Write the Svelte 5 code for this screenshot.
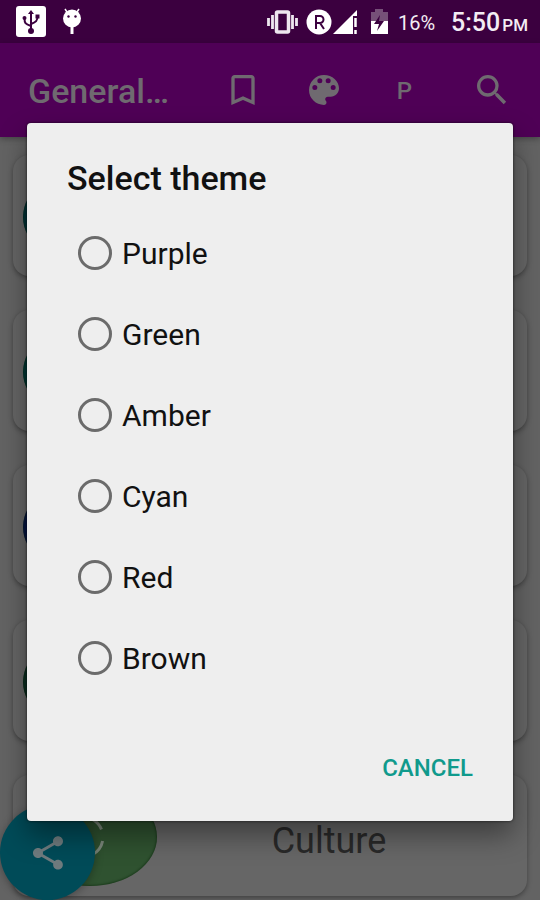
<script>
  const themes = ['Purple', 'Green', 'Amber', 'Cyan', 'Red', 'Brown'];
  const topics = [
    { color: '#00353c' },
    { color: '#003a38' },
    { color: '#071548' },
    { color: '#0d3024' },
    { color: '#2f5230', name: 'Culture' }
  ];
  let selected = $state('');
</script>

<div class="screen">
  <header class="status">
    <div class="group">
      <svg width="30" height="32" viewBox="0 0 30 32">
        <rect width="30" height="31" rx="3" fill="#fff" />
        <g fill="none" stroke="#3b003f" stroke-width="2">
          <path d="M15 25V7M15 20C9 18 8.500 17 8.500 12M15 18C20 16 21.500 15 21.500 10" />
        </g>
        <g fill="#3b003f">
          <circle cx="15" cy="25" r="3" />
          <path d="M12 8l3-4 3 4z" />
          <circle cx="8.500" cy="12" r="2" />
          <path d="M19.500 8.500h4v4h-4z" />
        </g>
      </svg>
      <svg width="20" height="28" viewBox="0 0 20 28">
        <g fill="#fff" stroke="#fff">
          <path d="M3 1l2 3M17 1l-2 3" stroke-width="1.500" />
          <circle cx="10" cy="10.500" r="9" stroke="none" />
          <path d="M10 18v8" stroke-width="3" />
        </g>
        <circle cx="6.500" cy="8.500" r="1.200" fill="#3b003f" />
        <circle cx="13.500" cy="8.500" r="1.200" fill="#3b003f" />
      </svg>
    </div>
    <div class="group right">
      <svg width="126" height="28" viewBox="0 0 126 28">
        <rect x="10.500" y="4" width="12" height="20" rx="1" fill="none" stroke="#eee6ef" stroke-width="3.500" />
        <path d="M6.500 7v14M2.500 10v8M26.500 7v14M30.500 10v8" stroke="#eee6ef" stroke-width="2.800" />
        <circle cx="53" cy="14" r="12.500" fill="#fff" />
        <path d="M50 21V8h4a3.200 3.200 0 0 1 0 7h-4M54 15l4 6" fill="none" stroke="#3b003f" stroke-width="2" />
        <path d="M67 26L91 2v6h-4v18z" fill="#fff" />
        <path d="M89.500 10v9M89.500 22v4" stroke="#fff" stroke-width="2.500" />
        <path d="M105 4h4V1h8v3h5v11h-17z" fill="#765078" />
        <path d="M105 13h17v13h-17z" fill="#fff" />
        <path d="M114 7l-6 9h5l-2 7 7-10h-5z" fill="#3b003f" />
      </svg>
      <span class="battery">16%</span>
      <span class="clock">5:50<small>PM</small></span>
    </div>
  </header>

  <div class="toolbar">
    <h1>General…</h1>
    <nav>
      <button aria-label="Bookmarks">
        <svg width="40" height="40" viewBox="0 0 24 24"><path d="M17 3H7c-1.100 0-2 .9-2 2v16l7-3 7 3V5c0-1.100-.9-2-2-2zm0 15l-5-2.180L7 18V5h10v13z" /></svg>
      </button>
      <button aria-label="Theme">
        <svg width="40" height="40" viewBox="0 0 24 24"><path d="M12 3a9 9 0 0 0 0 18c.83 0 1.500-.67 1.500-1.500 0-.39-.15-.74-.39-1.010-.23-.26-.38-.61-.38-.99 0-.83.67-1.500 1.500-1.500H16c2.760 0 5-2.240 5-5 0-4.420-4.030-8-9-8zm-5.500 9a1.500 1.500 0 1 1 0-3 1.500 1.500 0 0 1 0 3zm3-4a1.500 1.500 0 1 1 0-3 1.500 1.500 0 0 1 0 3zm5 0a1.500 1.500 0 1 1 0-3 1.500 1.500 0 0 1 0 3zm3 4a1.500 1.500 0 1 1 0-3 1.500 1.500 0 0 1 0 3z" /></svg>
      </button>
      <button class="letter">P</button>
    </nav>
    <nav>
      <button aria-label="Search">
        <svg width="40" height="40" viewBox="0 0 24 24"><path d="M15.500 14h-.79l-.28-.27A6.471 6.471 0 0 0 16 9.500 6.500 6.500 0 1 0 9.500 16c1.610 0 3.090-.59 4.230-1.570l.27.28v.79l5 4.990L20.490 19l-4.990-5zm-6 0C7.010 14 5 11.990 5 9.500S7.010 5 9.500 5 14 7.010 14 9.500 11.990 14 9.500 14z" /></svg>
      </button>
    </nav>
  </div>

  <main>
    {#each topics as topic}
      <article>
        <div class="disc" style:background={topic.color}>
          {#if topic.name}
            <svg width="48" height="48" viewBox="0 0 48 48">
              <path d="M34 6.700A20 20 0 0 1 42.500 16.300M43.600 28A20 20 0 0 1 34 41.300M14 41.300A20 20 0 0 1 4.400 28M5.500 16.300A20 20 0 0 1 14 6.700" />
            </svg>
          {/if}
        </div>
        {#if topic.name}<h2>{topic.name}</h2>{/if}
      </article>
    {/each}
  </main>

  <button class="fab" aria-label="Share">
    <svg width="40" height="40" viewBox="0 0 24 24"><path d="M18 16.080c-.76 0-1.440.3-1.960.77L8.910 12.700c.05-.23.09-.46.09-.7s-.04-.47-.09-.7l7.050-4.110c.54.5 1.250.81 2.040.81 1.660 0 3-1.340 3-3s-1.340-3-3-3-3 1.340-3 3c0 .24.04.47.09.7L8.040 9.810C7.500 9.310 6.790 9 6 9c-1.660 0-3 1.340-3 3s1.340 3 3 3c.79 0 1.500-.31 2.040-.81l7.120 4.160c-.05.21-.08.43-.08.65 0 1.610 1.310 2.920 2.920 2.920s2.920-1.310 2.920-2.920-1.310-2.920-2.920-2.920z" /></svg>
  </button>

  <div class="overlay">
    <form class="dialog" aria-labelledby="dialog-title">
      <h2 id="dialog-title">Select theme</h2>
      <div class="options">
        {#each themes as theme}
          <label>
            <input type="radio" name="theme" value={theme} bind:group={selected} />
            <span>{theme}</span>
          </label>
        {/each}
      </div>
      <div class="actions"><button type="button">CANCEL</button></div>
    </form>
  </div>
</div>

<style>
  .screen {
    position: relative;
    min-height: 100vh;
    box-sizing: border-box;
    overflow: hidden;
    background: #636363;
    font-family: Roboto, 'Liberation Sans', sans-serif;
  }
  h1, h2 { margin: 0; }
  svg { display: block; flex: none; }
  button {
    border: 0;
    padding: 0;
    background: none;
    font-family: inherit;
    cursor: pointer;
  }
  .status {
    display: flex;
    justify-content: space-between;
    align-items: center;
    height: 43px;
    padding: 0 12px 0 16px;
    background: #3b003f;
    color: #f3edf4;
  }
  .group { display: flex; align-items: center; gap: 16px; }
  .right { gap: 0; }
  .battery { margin: 2px 16px 0 6px; font-size: 20px; }
  .clock { padding-top: 2px; font-size: 25px; font-weight: 500; }
  small { margin-left: 2px; font-size: 17px; }
  .toolbar {
    display: flex;
    align-items: center;
    height: 94px;
    padding: 0 8px 0 28px;
    background: #4f0056;
    box-shadow: 0 2px 6px rgba(0, 0, 0, 0.3);
    color: #6f6a70;
  }
  h1 { flex: 1; padding-top: 2px; font-size: 34px; font-weight: 500; }
  nav { display: flex; }
  nav + nav { margin-left: 6px; }
  nav button {
    display: flex;
    justify-content: center;
    align-items: center;
    width: 81px;
    height: 80px;
    color: inherit;
    fill: currentColor;
  }
  nav .letter { padding-top: 2px; font-size: 24px; font-weight: 500; }
  main {
    display: flex;
    flex-direction: column;
    gap: 34px;
    padding: 18px 13px 4px;
  }
  article {
    display: flex;
    align-items: center;
    height: 121px;
    padding: 2px 10px 0;
    box-sizing: border-box;
    border-radius: 16px;
    background: #666;
    box-shadow: 0 2px 5px rgba(0, 0, 0, 0.35);
  }
  .disc {
    display: flex;
    justify-content: center;
    align-items: center;
    flex: none;
    width: 134px;
    height: 98px;
    border-radius: 50%;
    box-shadow: inset 0 0 2px 1px rgba(0, 30, 0, 0.4);
  }
  .disc svg { margin-right: 14px; }
  .disc path {
    fill: none;
    stroke: #7b887b;
    stroke-width: 3;
  }
  article h2 {
    flex: 1;
    padding: 8px 16px 0 0;
    color: #292929;
    font-size: 36px;
    font-weight: 400;
    text-align: center;
  }
  .fab {
    position: absolute;
    bottom: 0;
    left: 0;
    display: flex;
    justify-content: center;
    align-items: center;
    width: 95px;
    height: 95px;
    border-radius: 50%;
    background: #004b58;
    box-shadow: 0 2px 8px rgba(0, 0, 0, 0.3);
    fill: #6f7b7e;
  }
  .overlay {
    position: absolute;
    inset: 43px 0 0;
    display: flex;
    justify-content: center;
    align-items: center;
    padding: 0 27px;
  }
  .dialog {
    flex: 1;
    box-sizing: border-box;
    padding: 32px 40px 26px;
    border-radius: 4px;
    background: #eee;
    box-shadow: 0 0 3px rgba(0, 0, 0, 0.7), 0 14px 28px rgba(0, 0, 0, 0.4);
  }
  .dialog h2 {
    color: #111;
    font-size: 34px;
    font-weight: 500;
    line-height: 46px;
  }
  .options { padding: 12px 11px 0; }
  label {
    display: flex;
    align-items: center;
    gap: 10px;
    height: 81px;
    color: #111;
    font-size: 30px;
  }
  input {
    appearance: none;
    flex: none;
    width: 34px;
    height: 34px;
    margin: 0;
    border: 3px solid #6b6b6b;
    border-radius: 50%;
  }
  input:checked {
    border-color: #009688;
    background: radial-gradient(#009688 45%, transparent 50%);
  }
  .actions { display: flex; justify-content: flex-end; padding-top: 42px; }
  .actions button {
    height: 54px;
    color: #109a8c;
    font-size: 24px;
    font-weight: 500;
  }
</style>
